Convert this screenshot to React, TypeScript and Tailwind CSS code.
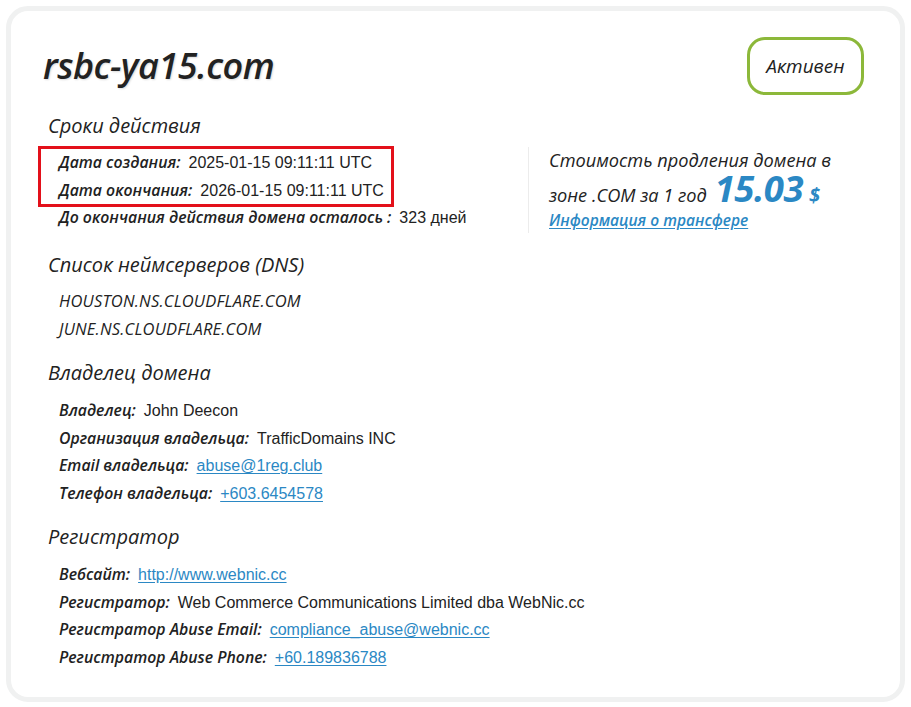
import React from 'react';

const heading = "font-['Open_Sans',sans-serif] italic font-medium text-[20px] leading-[30px] text-[#222]";
const label = "font-['Open_Sans',sans-serif] italic font-semibold text-[15.8px] text-[#222]";
const value = "font-['Liberation_Sans',sans-serif] text-[16px] text-[#222]";
const link = "font-['Liberation_Sans',sans-serif] text-[16px] text-[#2b88c4] underline underline-offset-2";

function Row({ name, children }: { name: string; children: React.ReactNode }) {
  return (
    <div className="flex items-baseline gap-2 leading-[27.5px] whitespace-nowrap">
      <span className={label}>{name}</span>
      {children}
    </div>
  );
}

export default function App() {
  return (
    <div className="w-[911px] h-[707px] bg-white p-[6px]">
      <div className="h-[696px] rounded-[22px] border-[5px] border-[#f0f1f1] bg-white pl-[32px] pr-[36px] pt-[26px]">
        <div className="flex items-center justify-between">
          <h1 className="font-['Open_Sans',sans-serif] italic font-semibold text-[36px] leading-[58px] text-[#222] [text-shadow:1px_1px_2px_rgba(0,0,0,0.15)] tracking-[-0.5px]">
            rsbc-ya15.com
          </h1>
          <div className="h-[58px] w-[117px] rounded-[18px] border-[3px] border-[#8cb83a] flex items-center justify-center font-['Open_Sans',sans-serif] italic font-medium text-[19px] text-[#222]">
            Активен
          </div>
        </div>

        <div className="mt-[16px] pl-[5px]">
          <h2 className={heading}>Сроки действия</h2>
          <div className="flex mt-[6px]">
            <div className="w-[480px] pt-[2px]">
              <div className="-ml-[7px] w-[350px] pl-[18px] outline-[3px] outline-solid outline-[#e3101a]">
                <Row name="Дата создания:">
                  <span className={value}>2025-01-15 09:11:11 UTC</span>
                </Row>
                <Row name="Дата окончания:">
                  <span className={value}>2026-01-15 09:11:11 UTC</span>
                </Row>
              </div>
              <div className="pl-[11px]">
                <Row name="До окончания действия домена осталось :">
                  <span className={value}>323 дней</span>
                </Row>
              </div>
            </div>
            <div className="border-l border-[#ececec] pl-[20px] font-['Open_Sans',sans-serif] italic font-medium text-[18.2px] text-[#222]">
              <div className="leading-[26px]">Стоимость продления домена в</div>
              <div className="flex items-baseline h-[34px] leading-[34px]">
                <span>зоне .COM за 1 год</span>
                <span className="ml-[8px] text-[36.5px] leading-[30px] font-bold text-[#2b88c4] tracking-[-0.5px]">15.03</span>
                <span className="ml-[6px] text-[20px] font-bold text-[#2b88c4]">$</span>
              </div>
              <a className="block leading-[26px] text-[15.5px] font-semibold text-[#2b88c4] underline underline-offset-2">
                Информация о трансфере
              </a>
            </div>
          </div>

          <h2 className={`${heading} mt-[17px]`}>Список неймсерверов (DNS)</h2>
          <div className="pl-[11px] mt-[7px] font-['Open_Sans',sans-serif] italic font-medium text-[16.5px] leading-[28px] text-[#222] tracking-[0.2px]">
            <div>HOUSTON.NS.CLOUDFLARE.COM</div>
            <div>JUNE.NS.CLOUDFLARE.COM</div>
          </div>

          <h2 className={`${heading} mt-[15px]`}>Владелец домена</h2>
          <div className="pl-[11px] mt-[9px]">
            <Row name="Владелец:">
              <span className={value}>John Deecon</span>
            </Row>
            <Row name="Организация владельца:">
              <span className={value}>TrafficDomains INC</span>
            </Row>
            <Row name="Email владельца:">
              <a className={link}>abuse@1reg.club</a>
            </Row>
            <Row name="Телефон владельца:">
              <a className={link}>+603.6454578</a>
            </Row>
          </div>

          <h2 className={`${heading} mt-[15px]`}>Регистратор</h2>
          <div className="pl-[11px] mt-[9px]">
            <Row name="Вебсайт:">
              <a className={link}>http://www.webnic.cc</a>
            </Row>
            <Row name="Регистратор:">
              <span className={value}>Web Commerce Communications Limited dba WebNic.cc</span>
            </Row>
            <Row name="Регистратор Abuse Email:">
              <a className={link}>compliance_abuse@webnic.cc</a>
            </Row>
            <Row name="Регистратор Abuse Phone:">
              <a className={link}>+60.189836788</a>
            </Row>
          </div>
        </div>
      </div>
    </div>
  );
}
